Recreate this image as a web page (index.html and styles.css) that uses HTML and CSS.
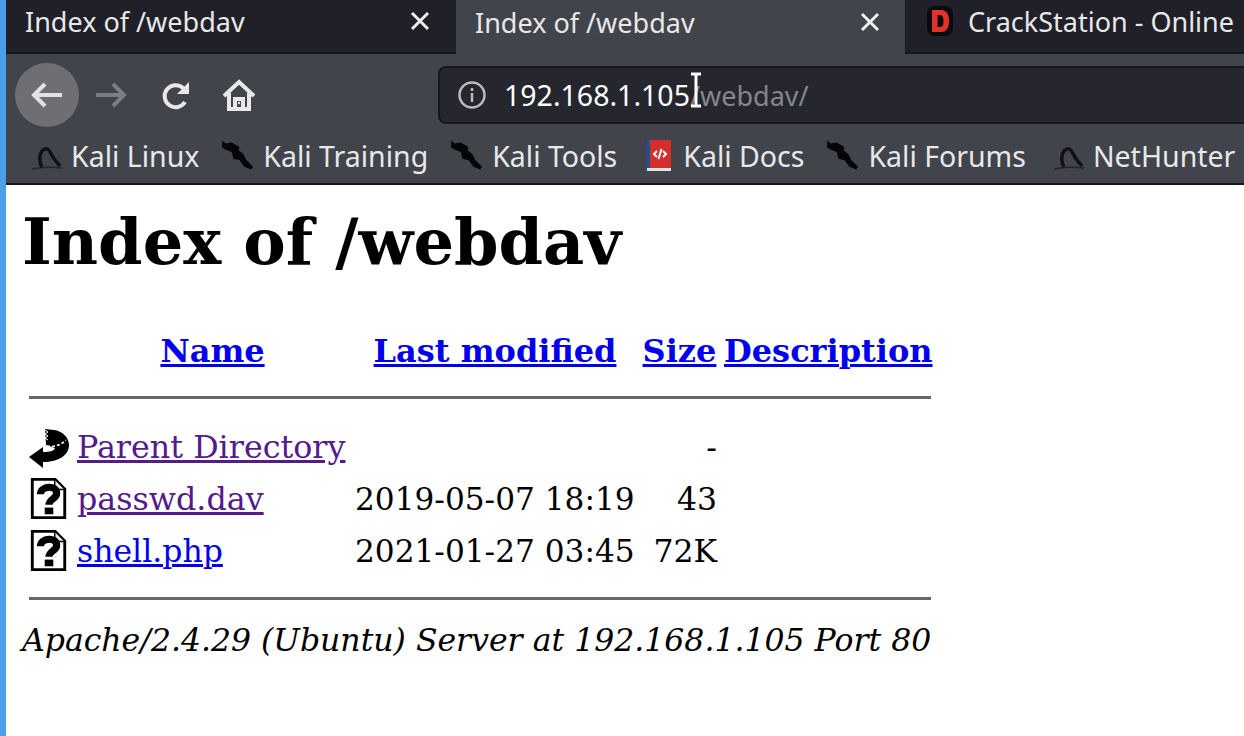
FILE: index.html
```html
<!DOCTYPE html>
<html lang="en">
<head>
    <meta charset="UTF-8">
    <title>Index of /webdav</title>
    <link rel="stylesheet" href="styles.css">
</head>
<body>
    <svg class="defs" width="0" height="0">
        <symbol id="dragon" viewBox="0 0 30 30">
            <path d="M0 28c9-2 21-2 30-1" fill="none" stroke="#24242a" stroke-width="1.500"/>
            <path d="M10 26c-3-5-3-12 0-16 3-3 6-3 8 1 2 4 6 10 10 14" fill="none" stroke="#111115" stroke-width="3.500"/>
        </symbol>
        <symbol id="knife" viewBox="0 0 34 32">
            <path d="M1 0l4 3 6-1 5 3 3 2-1 3 5 4 3 6 7 7-2 3-7-3-5-7-6-1-2-7-7-3-3-2z" fill="#050507"/>
        </symbol>
        <symbol id="unknown" viewBox="0 0 38 44">
            <path d="M1.500 1.500h24l10 10v30h-34z" fill="#fff" stroke="#000" stroke-width="3"/>
            <path d="M25 2v10h10" fill="#e8e8e8" stroke="#000" stroke-width="1.500"/>
            <path d="M10 17c0-9 17-10 17-1 0 6-8 6-8 12" fill="none" stroke="#000" stroke-width="7.500"/>
            <rect x="14.500" y="31" width="9" height="7"/>
        </symbol>
    </svg>

    <div class="browser">
        <div class="tabs">
            <div class="tab">
                <span class="tab-title">Index of /webdav</span>
                <svg class="tab-close" viewBox="0 0 20 20"><path d="M2 2l16 16M18 2L2 18"/></svg>
            </div>
            <div class="tab active">
                <span class="tab-title">Index of /webdav</span>
                <svg class="tab-close" viewBox="0 0 20 20"><path d="M2 2l16 16M18 2L2 18"/></svg>
            </div>
            <div class="tab last">
                <svg class="favicon" viewBox="0 0 26 30">
                    <rect width="26" height="30" rx="8" fill="#0b0b0d"/>
                    <path d="M5 4h9c6 0 8 5 8 11s-2 11-8 11H5zM10.500 9v12h2.500c3 0 3.500-3 3.500-6s-.5-6-3.500-6z" fill="#e5312b" fill-rule="evenodd"/>
                </svg>
                <span class="tab-title">CrackStation - Online</span>
            </div>
        </div>

        <div class="navbar">
            <span class="back">
                <svg viewBox="0 0 34 30"><path d="M32 15H4M15 4L4 15l11 11"/></svg>
            </span>
            <svg class="nav-icon forward" viewBox="0 0 34 30"><path d="M2 15h28M19 4l11 11-11 11"/></svg>
            <svg class="nav-icon reload" viewBox="0 0 32 32">
                <path d="M25 23a11 11 0 1 1-2-14l3 3"/>
                <path class="solid" d="M29 3v12H17z"/>
            </svg>
            <svg class="nav-icon home" viewBox="0 0 34 34">
                <path d="M2 18L17 4l15 14M7 15v16h20V15M13 31v-10h8v10"/>
                <circle class="solid" cx="17" cy="25" r="1.200"/>
            </svg>
            <div class="urlbar">
                <svg class="info" viewBox="0 0 28 28">
                    <circle cx="14" cy="14" r="12.500"/>
                    <path d="M14 12v9M14 7v3"/>
                </svg>
                <span class="host">192.168.1.105</span><span class="path">/webdav/</span>
                <svg class="cursor" viewBox="0 0 14 36"><path d="M2 2h10M2 34h10M7 2v32"/></svg>
            </div>
        </div>

        <div class="bookmarks">
            <span class="bookmark"><svg class="bm-icon"><use href="#dragon"/></svg>Kali Linux</span>
            <span class="bookmark"><svg class="bm-icon knife"><use href="#knife"/></svg>Kali Training</span>
            <span class="bookmark"><svg class="bm-icon knife"><use href="#knife"/></svg>Kali Tools</span>
            <span class="bookmark docs">
                <svg class="bm-icon" viewBox="0 0 30 32">
                    <rect x="3" y="0" width="24" height="28" fill="#d3302b"/>
                    <rect x="3" y="0" width="3" height="28" fill="#1f4e9c"/>
                    <rect x="3" y="28" width="24" height="3" fill="#e4e4e4"/>
                    <path d="M13 11l-3 3 3 3M19 11l3 3-3 3M17.500 9l-3 10" fill="none" stroke="#fff" stroke-width="2"/>
                </svg>Kali Docs</span>
            <span class="bookmark"><svg class="bm-icon knife"><use href="#knife"/></svg>Kali Forums</span>
            <span class="bookmark nethunter"><svg class="bm-icon"><use href="#dragon"/></svg>NetHunter</span>
        </div>
    </div>

    <main class="page">
        <h1>Index of /webdav</h1>
        <table class="listing">
            <colgroup>
                <col class="col-icon"><col class="col-name"><col class="col-date"><col class="col-size"><col class="col-desc">
            </colgroup>
            <tr class="head">
                <th></th>
                <th><a href="#">Name</a></th>
                <th><a href="#">Last modified</a></th>
                <th><a href="#">Size</a></th>
                <th><a href="#">Description</a></th>
            </tr>
            <tr class="rule rule-top"><td colspan="5"><hr></td></tr>
            <tr>
                <td>
                    <svg class="file-icon" viewBox="0 0 40 42">
                        <path d="M0 31l14-10v5c7 0 11-1 12-4l-9-3-1-16 9 1c8 1 15 7 15 15 0 10-10 17-26 17v6z"/>
                        <path d="M16 4l3 2-3 2 3 2-3 2 3 2" fill="none" stroke="#fff" stroke-width="1"/>
                        <path d="M18 20c6 1 13 0 19-6" fill="none" stroke="#fff" stroke-width="1.500" stroke-dasharray="3 2"/>
                    </svg>
                </td>
                <td class="name"><a class="visited" href="#">Parent Directory</a></td>
                <td></td>
                <td class="size">-</td>
                <td></td>
            </tr>
            <tr>
                <td><svg class="file-icon"><use href="#unknown"/></svg></td>
                <td class="name"><a class="visited" href="#">passwd.dav</a></td>
                <td class="date">2019-05-07 18:19</td>
                <td class="size">43</td>
                <td></td>
            </tr>
            <tr>
                <td><svg class="file-icon"><use href="#unknown"/></svg></td>
                <td><a href="#">shell.php</a></td>
                <td class="date">2021-01-27 03:45</td>
                <td class="size">72K</td>
                <td></td>
            </tr>
            <tr class="rule rule-bottom"><td colspan="5"><hr></td></tr>
        </table>
        <address>Apache/2.4.29 (Ubuntu) Server at 192.168.1.105 Port 80</address>
    </main>
</body>
</html>
```

FILE: styles.css
```css
* {
    box-sizing: border-box;
}
html, body {
    height: 100%;
}
body {
    margin: 0;
    overflow: hidden;
    background: #fff;
    border-left: 6px solid #4a9fe8;
    font-family: "DejaVu Serif", serif;
}
.defs {
    position: absolute;
}

/* browser chrome */
.browser {
    font-family: "Noto Sans", "Open Sans", sans-serif;
    background: #42444c;
    color: #e8e8e8;
}
.tabs {
    display: flex;
    height: 54px;
}
.tab {
    display: flex;
    align-items: center;
    flex: 0 0 450px;
    height: 54px;
    padding: 0 26px 10px 19px;
    background: #1f2028;
    border-bottom: 2px solid #16161b;
    font-size: 27px;
}
.tab.active {
    background: #42444c;
    border-bottom: 0;
}
.tab.last {
    flex: 1;
    min-width: 0;
    margin-left: -1px;
    padding-left: 22px;
    padding-right: 0;
    white-space: nowrap;
}
.tab-title {
    flex: 1;
}
.tab-close {
    width: 20px;
    height: 20px;
    fill: none;
    stroke: #eee;
    stroke-width: 3;
}
.favicon {
    width: 26px;
    height: 30px;
    margin-right: 15px;
    flex: none;
}

.navbar {
    display: flex;
    align-items: center;
    height: 74px;
    padding: 8px 0 0 9px;
}
.back {
    display: flex;
    align-items: center;
    justify-content: center;
    width: 64px;
    height: 64px;
    border-radius: 50%;
    background: #6e6f73;
}
.back svg {
    width: 34px;
    height: 30px;
    fill: none;
    stroke: #e2e2e2;
    stroke-width: 4;
}
.nav-icon {
    fill: none;
    stroke: #e8e8e8;
    stroke-width: 4;
}
.nav-icon .solid {
    fill: #e8e8e8;
    stroke: none;
}
.forward {
    width: 34px;
    height: 30px;
    margin-left: 15px;
    stroke: #7c7d82;
}
.reload {
    width: 32px;
    height: 32px;
    margin-left: 32px;
}
.home {
    width: 34px;
    height: 34px;
    margin-left: 30px;
}
.urlbar {
    position: relative;
    display: flex;
    align-items: center;
    flex: 1;
    height: 58px;
    margin-left: 182px;
    padding-left: 18px;
    background: #25262e;
    border: 2px solid #17171c;
    border-right: 0;
    border-radius: 8px 0 0 8px;
    font-size: 28.500px;
}
.info {
    width: 28px;
    height: 28px;
    margin-right: 18px;
    fill: none;
    stroke: #bbb;
    stroke-width: 2.500;
}
.host {
    color: #fff;
}
.path {
    color: #85868b;
    font-size: 27px;
}
.cursor {
    position: absolute;
    left: 249px;
    top: 4px;
    width: 14px;
    height: 36px;
    fill: none;
    stroke: #fff;
    stroke-width: 3;
}

.bookmarks {
    display: flex;
    align-items: center;
    gap: 22px;
    height: 57px;
    padding: 0 0 0 26px;
    border-bottom: 2px solid #16161b;
    font-size: 28.500px;
    white-space: nowrap;
}
.bookmark {
    display: flex;
    align-items: center;
    gap: 9px;
}
.docs {
    margin-left: 5px;
}
.nethunter {
    margin-left: 6px;
}
.bm-icon {
    width: 30px;
    height: 32px;
}
.bm-icon.knife {
    width: 33px;
}

/* apache listing */
.page {
    padding: 0 0 0 16px;
    color: #000;
    font-size: 31.500px;
}
h1 {
    margin: 21px 0 48px;
    font-size: 63.700px;
    line-height: 72px;
}
a {
    color: #0000ee;
}
a.visited {
    color: #551a8b;
}
.listing {
    table-layout: fixed;
    width: 916px;
    border-collapse: separate;
    border-spacing: 7px 0;
}
.col-icon { width: 41px; }
.col-name { width: 271px; }
.col-date { width: 280px; }
.col-size { width: 75px; }
.col-desc { width: 207px; }
.listing th, .listing td {
    padding: 0;
    height: 52px;
    white-space: nowrap;
}
.listing th {
    height: 50px;
    font-size: 32px;
    text-align: center;
}
.listing td {
    vertical-align: middle;
}
.listing .rule-top td {
    height: 45px;
    padding-bottom: 2px;
}
.listing .rule-bottom td {
    height: 43px;
    padding-bottom: 1px;
}
hr {
    height: 3px;
    margin: 0;
    border: 0;
    background: #666;
}
.name {
    font-size: 31.750px;
}
.date {
    font-size: 31.200px;
}
.size {
    text-align: right;
}
.file-icon {
    display: block;
    width: 40px;
    height: 42px;
}
address {
    line-height: 40px;
}
```
